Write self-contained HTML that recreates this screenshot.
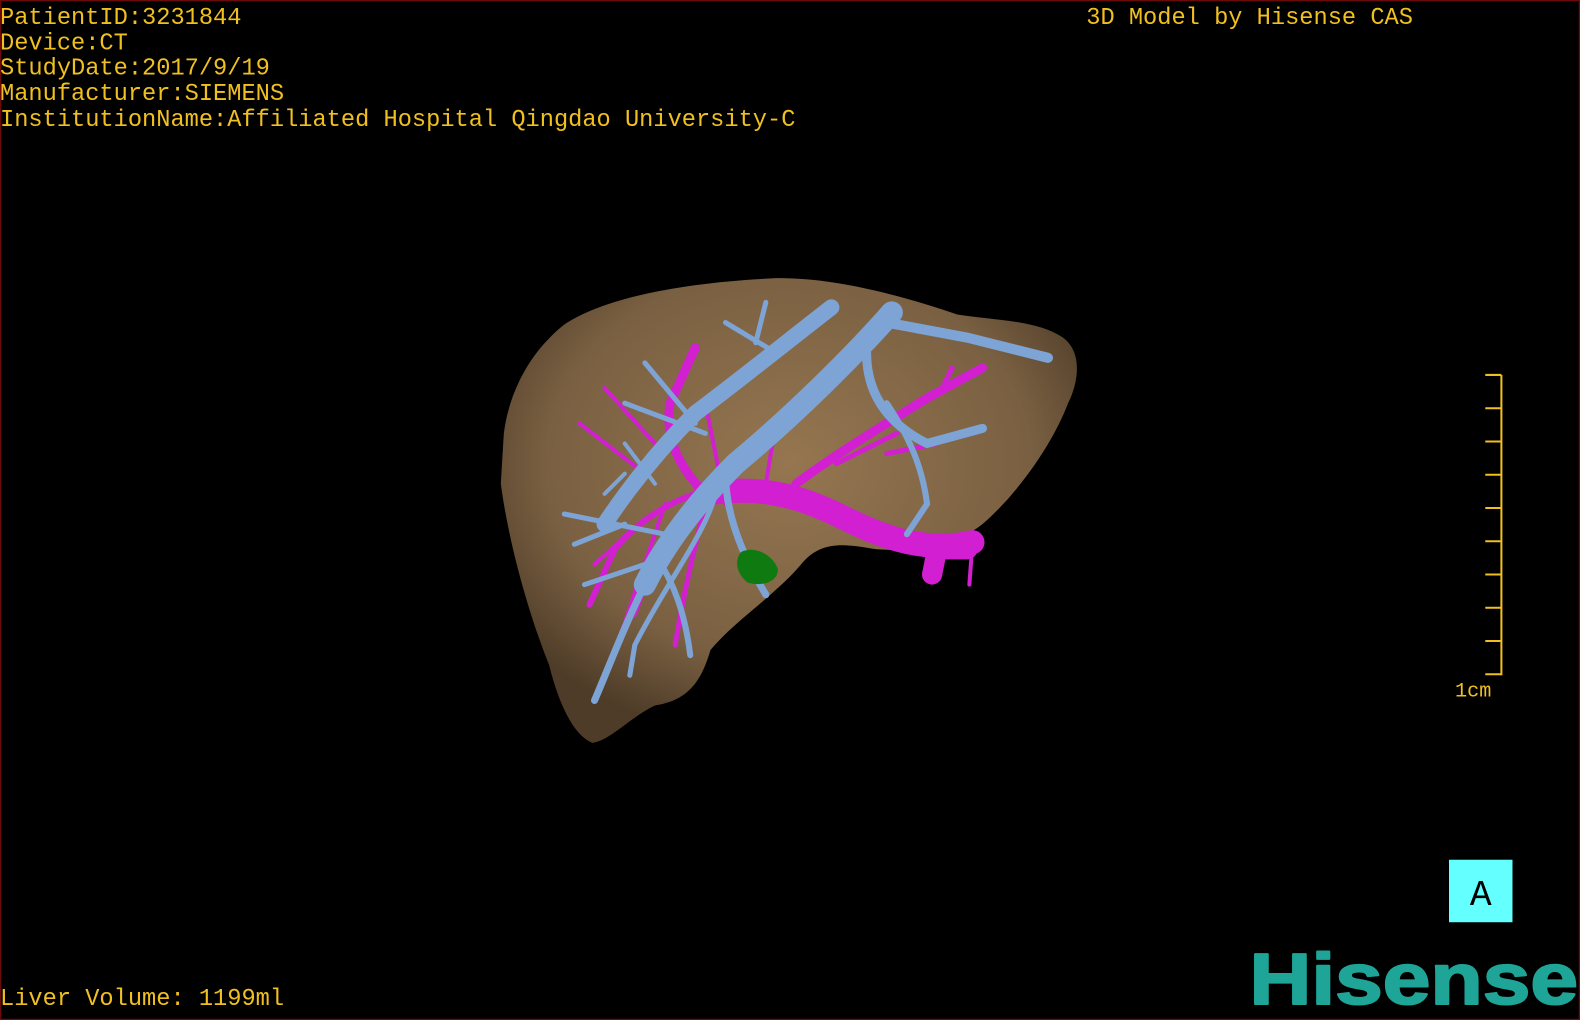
<!DOCTYPE html>
<html><head><meta charset="utf-8"><style>
html,body{margin:0;padding:0;background:#000;width:1580px;height:1020px;overflow:hidden}
svg{display:block}
</style></head><body>
<svg width="1580" height="1020" viewBox="0 0 1568 1012" preserveAspectRatio="none" xmlns="http://www.w3.org/2000/svg">
<defs>
<radialGradient id="lv" cx="0.5" cy="0.4" r="0.6">
<stop offset="0" stop-color="#957650"/><stop offset="0.7" stop-color="#7a6042"/><stop offset="1" stop-color="#4e3c28"/>
</radialGradient>
</defs>
<rect x="0" y="0" width="1568" height="1012" fill="#000"/>
<rect x="0.5" y="0.5" width="1567" height="1011" fill="none" stroke="#6a0a0a" stroke-width="1.5"/>
<g font-family="Liberation Mono, monospace" font-size="23.5" fill="#f0c020">
<text x="0" y="24">PatientID:3231844</text>
<text x="0" y="49">Device:CT</text>
<text x="0" y="74">StudyDate:2017/9/19</text>
<text x="0" y="99">Manufacturer:SIEMENS</text>
<text x="0" y="125">InstitutionName:Affiliated Hospital Qingdao University-C</text>
<text x="1078" y="24">3D Model by Hisense CAS</text>
<text x="0" y="997">Liver Volume: 1199ml</text>
<text x="1444" y="691" font-size="20">1cm</text>
</g>
<path d="M500,430 C505,390 525,350 560,322 C600,295 680,280 770,276 C830,275 900,295 950,312 C990,318 1030,318 1055,335 C1075,350 1070,380 1060,400 C1045,440 1010,490 975,520 C950,540 910,548 870,545 C840,540 815,535 795,560 C770,590 730,615 705,645 C695,680 680,695 650,700 C625,712 605,735 588,737 C570,730 555,700 545,660 C525,610 505,540 497,480 Z" fill="url(#lv)"/>
<g stroke="#f0c020" stroke-width="2" fill="none">
<line x1="1490" y1="372" x2="1490" y2="670"/>
<line x1="1474" y1="372" x2="1490" y2="372"/><line x1="1474" y1="405" x2="1490" y2="405"/><line x1="1474" y1="438" x2="1490" y2="438"/><line x1="1474" y1="471" x2="1490" y2="471"/><line x1="1474" y1="504" x2="1490" y2="504"/><line x1="1474" y1="537" x2="1490" y2="537"/><line x1="1474" y1="570" x2="1490" y2="570"/><line x1="1474" y1="603" x2="1490" y2="603"/><line x1="1474" y1="636" x2="1490" y2="636"/><line x1="1474" y1="669" x2="1490" y2="669"/>
</g>
<g stroke="#d21fd2" fill="none" stroke-linecap="round">
<path d="M700,490 C760,480 800,495 840,515 C880,535 920,548 965,538" stroke-width="24"/>
<path d="M925,570 L930,545 L960,545" stroke-width="20"/>
<path d="M965,540 L962,580" stroke-width="4"/>
<path d="M790,480 C830,450 880,420 920,395 L975,365" stroke-width="9"/>
<path d="M830,460 L890,430 M880,450 L930,440 M935,385 L945,365" stroke-width="5"/>
<path d="M700,490 C670,460 660,430 665,400 L690,345" stroke-width="9"/>
<path d="M690,490 C660,500 630,520 610,545 L585,600" stroke-width="6"/>
<path d="M700,500 C690,540 680,580 670,640" stroke-width="5"/>
<path d="M650,440 L600,385 M640,470 L575,420 M640,515 L590,560 M660,530 L630,610" stroke-width="4"/>
<path d="M660,500 C640,560 625,600 610,650" stroke-width="4"/>
<path d="M760,480 L770,420 M720,500 L700,400" stroke-width="4"/>
</g>
<g stroke="#7ea4d6" fill="none" stroke-linecap="round">
<path d="M885,310 C850,350 790,410 730,460 C690,500 660,540 640,580" stroke-width="22"/>
<path d="M825,305 C780,340 730,380 690,410 C650,450 620,490 600,520" stroke-width="16"/>
<path d="M880,320 L960,335 L1040,355" stroke-width="10"/>
<path d="M860,350 C860,390 880,420 920,440 L975,425" stroke-width="9"/>
<path d="M880,400 C900,430 915,460 920,500 L900,530" stroke-width="6"/>
<path d="M720,470 C720,500 730,540 760,590" stroke-width="7"/>
<path d="M640,580 C620,620 605,660 590,695" stroke-width="7"/>
<path d="M650,550 C670,580 680,610 685,650" stroke-width="6"/>
<path d="M660,530 L560,510 M640,560 L580,580 M620,520 L570,540" stroke-width="5"/>
<path d="M700,430 L620,400 M690,420 L640,360 M770,350 L720,320 M750,340 L760,300" stroke-width="5"/>
<path d="M710,490 C700,530 660,580 630,640 L625,670" stroke-width="5"/>
<path d="M620,470 L600,490 M650,480 L620,440" stroke-width="4"/>
</g>
<path d="M735,548 C750,540 768,552 772,565 C772,578 755,582 742,578 C732,570 728,558 735,548 Z" fill="#0e7a10"/>
<rect x="1438" y="853" width="63" height="62" fill="#64ffff"/>
<text x="1469.5" y="898" text-anchor="middle" font-family="Liberation Mono, monospace" font-size="36" fill="#000">A</text>
<text x="1240" y="996" font-family="Liberation Sans, sans-serif" font-weight="bold" font-size="72" fill="#1ea597" stroke="#1ea597" stroke-width="2" stroke-linejoin="round" textLength="326" lengthAdjust="spacingAndGlyphs">Hisense</text>
</svg>
</body></html>
